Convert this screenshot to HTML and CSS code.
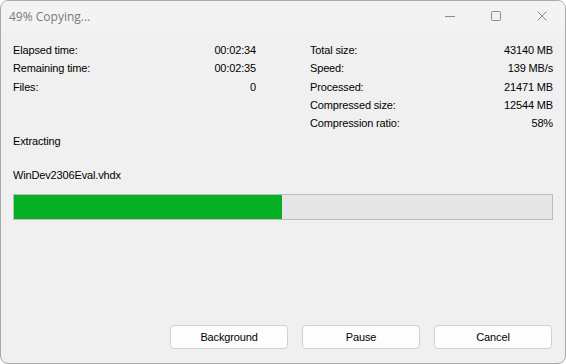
FILE: index.html
```html
<!DOCTYPE html>
<html lang="en">
  <head>
    <meta charset="UTF-8" />
    <title>49% Copying...</title>
    <link rel="stylesheet" href="styles.css">
  </head>
  <body>
    <div class="window">
      <div class="titlebar">
        <span class="title">49% Copying...</span>
        <div class="controls">
          <span class="ctl">
            <svg width="12" height="12" viewBox="0 0 12 12"><path d="M1 6.5h10" stroke="#8a8a8a" stroke-width="1" fill="none"/></svg>
          </span>
          <span class="ctl">
            <svg width="12" height="12" viewBox="0 0 12 12"><rect x="1.5" y="1.5" width="9" height="9" rx="1" stroke="#8a8a8a" stroke-width="1" fill="none"/></svg>
          </span>
          <span class="ctl">
            <svg width="12" height="12" viewBox="0 0 12 12"><path d="M1.5 1.5l9 9M10.5 1.5l-9 9" stroke="#8a8a8a" stroke-width="1" fill="none"/></svg>
          </span>
        </div>
      </div>

      <div class="content">
        <div class="stats">
          <div class="col">
            <span>Elapsed time:</span><span class="val">00:02:34</span>
            <span>Remaining time:</span><span class="val">00:02:35</span>
            <span>Files:</span><span class="val">0</span>
          </div>
          <div class="col">
            <span>Total size:</span><span class="val">43140 MB</span>
            <span>Speed:</span><span class="val">139 MB/s</span>
            <span>Processed:</span><span class="val">21471 MB</span>
            <span>Compressed size:</span><span class="val">12544 MB</span>
            <span>Compression ratio:</span><span class="val">58%</span>
          </div>
        </div>

        <div class="status">Extracting</div>
        <div class="filename">WinDev2306Eval.vhdx</div>

        <div class="progress">
          <div class="fill" style="width: 49.8%"></div>
        </div>

        <div class="buttons">
          <button class="btn">Background</button>
          <button class="btn">Pause</button>
          <button class="btn">Cancel</button>
        </div>
      </div>
    </div>
  </body>
</html>
```

FILE: styles.css
```css
html,
body {
  margin: 0;
  padding: 0;
  background: #ffffff;
}
.window {
  box-sizing: border-box;
  width: 566px;
  height: 364px;
  border: 1px solid #a9a9a9;
  border-radius: 8px;
  background: #f0f0f0;
  overflow: hidden;
  display: flex;
  flex-direction: column;
  font-family: "Liberation Sans", Arial, sans-serif;
  font-size: 11px;
  letter-spacing: -0.15px;
  color: #000;
}
.titlebar {
  height: 30px;
  background: #f3f3f3;
  display: flex;
  align-items: center;
  justify-content: space-between;
  padding-left: 8px;
}
.title {
  font-family: "Open Sans", "Noto Sans", sans-serif;
  font-size: 12px;
  letter-spacing: 0;
  color: #7a7a7a;
}
.controls {
  display: flex;
  height: 100%;
}
.ctl {
  width: 46px;
  display: flex;
  align-items: center;
  justify-content: center;
}
.content {
  flex: 1;
  display: flex;
  flex-direction: column;
  padding: 10px 12px 14px 12px;
}
.stats {
  display: grid;
  grid-template-columns: 243px 243px;
  column-gap: 54px;
}
.col {
  display: grid;
  grid-template-columns: 1fr auto;
  grid-auto-rows: 18.3px;
  align-items: center;
}
.val {
  text-align: right;
}
.status {
  height: 18px;
  line-height: 18px;
}
.filename {
  margin-top: 16px;
  height: 18px;
  line-height: 18px;
}
.progress {
  margin-top: 10px;
  height: 24px;
  border: 1px solid #bcbcbc;
  background: #e6e6e6;
}
.fill {
  height: 100%;
  background: #06b025;
}
.buttons {
  margin-top: auto;
  margin-right: 1px;
  display: flex;
  justify-content: flex-end;
  gap: 14px;
}
.btn {
  width: 118px;
  height: 24px;
  background: #fdfdfd;
  border: 1px solid #d0d0d0;
  border-radius: 4px;
  font-family: "Liberation Sans", Arial, sans-serif;
  font-size: 11px;
  letter-spacing: -0.15px;
  color: #000;
  padding: 0;
}
```
